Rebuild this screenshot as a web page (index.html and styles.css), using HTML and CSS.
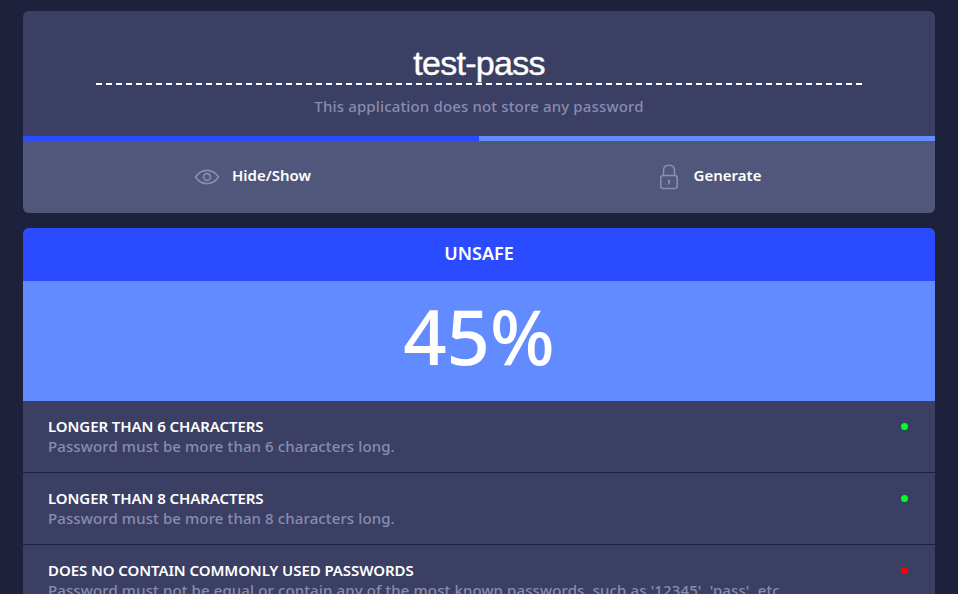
FILE: index.html
```html
<!DOCTYPE html>
<html lang="en">
<head>
    <meta charset="UTF-8">
    <meta name="viewport" content="width=device-width, initial-scale=1.0">
    <title>Password Strength</title>
    <link rel="stylesheet" href="styles.css">
</head>
<body>
    <div class="container">
        <div class="card">
            <div class="password-box">
                <input type="text" class="password-input" value="test-pass">
                <p class="password-note">This application does not store any password</p>
            </div>
            <div class="meter">
                <div class="meter-fill"></div>
                <div class="meter-rest"></div>
            </div>
            <div class="actions">
                <div class="action">
                    <svg class="action-icon" width="26" height="26" viewBox="0 0 26 26" fill="none" stroke="currentColor" stroke-width="1.6">
                        <path d="M1.5 13C4.5 8.600 8.400 6.400 13 6.400S21.500 8.600 24.500 13C21.500 17.400 17.600 19.600 13 19.600S4.500 17.400 1.500 13Z"/>
                        <circle cx="13" cy="13" r="3.400"/>
                    </svg>
                    <span class="action-label">Hide/Show</span>
                </div>
                <div class="action">
                    <svg class="action-icon lock-icon" width="22" height="26" viewBox="0 0 22 26" fill="none" stroke="currentColor" stroke-width="1.6">
                        <path d="M5.500 11.500V6.500C5.500 3.300 7.800 1.300 11 1.300S16.500 3.300 16.500 6.500V11.500"/>
                        <rect x="2.800" y="11.500" width="16.400" height="13" rx="2.400"/>
                        <circle cx="11" cy="17" r="1.300" fill="currentColor" stroke="none"/>
                        <path d="M11 17V20.500"/>
                    </svg>
                    <span class="action-label">Generate</span>
                </div>
            </div>
        </div>

        <div class="card">
            <div class="result-label">UNSAFE</div>
            <div class="result-score">45%</div>
            <div class="rule">
                <div>
                    <h3 class="rule-title">LONGER THAN 6 CHARACTERS</h3>
                    <p class="rule-text">Password must be more than 6 characters long.</p>
                </div>
                <span class="dot dot-ok"></span>
            </div>
            <div class="rule">
                <div>
                    <h3 class="rule-title">LONGER THAN 8 CHARACTERS</h3>
                    <p class="rule-text">Password must be more than 8 characters long.</p>
                </div>
                <span class="dot dot-ok"></span>
            </div>
            <div class="rule">
                <div>
                    <h3 class="rule-title">DOES NO CONTAIN COMMONLY USED PASSWORDS</h3>
                    <p class="rule-text">Password must not be equal or contain any of the most known passwords, such as '12345', 'pass', etc.</p>
                </div>
                <span class="dot dot-bad"></span>
            </div>
        </div>
    </div>
</body>
</html>
```

FILE: styles.css
```css
html {
    overflow: hidden;
}

body {
    font-family: 'Noto Sans', sans-serif;
    background: #1e213c;
    margin: 0;
    padding: 0;
    color: #fff;
}

.container {
    padding: 11px 23px;
}

.card {
    border-radius: 6px;
    overflow: hidden;
    background: #3b3f64;
    margin-bottom: 15px;
}

/* Password box */
.password-box {
    height: 125px;
    padding-top: 31px;
    box-sizing: border-box;
    text-align: center;
}

.password-input {
    display: block;
    box-sizing: border-box;
    width: 766px;
    height: 43px;
    margin: 0 auto;
    padding: 1px 0 0;
    border: none;
    border-bottom: 2px dashed #fff;
    background: transparent;
    outline: none;
    color: #fff;
    font-family: 'Liberation Sans', sans-serif;
    font-size: 34px;
    letter-spacing: -0.7px;
    -webkit-text-stroke: 0.4px #fff;
    text-align: center;
}

.password-note {
    margin: 11px 0 0;
    font-size: 15px;
    font-weight: 500;
    line-height: 20px;
    color: #888cb0;
    letter-spacing: 0.15px;
}

.meter {
    display: flex;
    height: 5px;
}

.meter-fill {
    width: 50%;
    background: #2a4bff;
}

.meter-rest {
    width: 50%;
    background: #618bff;
}

.actions {
    display: grid;
    grid-template-columns: 1fr 1fr;
    height: 72px;
    background: #51567b;
}

.action {
    display: flex;
    align-items: center;
    justify-content: center;
    gap: 12px;
    padding-left: 3px;
    font-size: 15px;
    font-weight: 600;
}

.action-label {
    padding-bottom: 4px;
}

.action-icon {
    color: #8a8dae;
}

.lock-icon {
    margin: 0 2px;
}

/* Result */
.result-label {
    height: 53px;
    line-height: 50px;
    background: #2a4bff;
    text-align: center;
    font-size: 18px;
    font-weight: 600;
}

.result-score {
    height: 120px;
    line-height: 110px;
    background: #618bff;
    text-align: center;
    font-size: 76px;
    font-weight: 500;
}

/* Rules */
.rule {
    display: flex;
    justify-content: space-between;
    height: 72px;
    box-sizing: border-box;
    padding: 15px 27px 0 25px;
    border-bottom: 1px solid #1e213c;
}

.rule-title {
    margin: 0;
    font-size: 15px;
    line-height: 20px;
    font-weight: 600;
    letter-spacing: -0.08px;
}

.rule-text {
    margin: 0;
    font-size: 15px;
    font-weight: 500;
    line-height: 20px;
    color: #888cb0;
    letter-spacing: 0.11px;
}

.dot {
    width: 7px;
    height: 7px;
    margin-top: 7px;
    border-radius: 50%;
}

.dot-ok {
    background: #00ff22;
}

.dot-bad {
    background: #ff0000;
}
```
